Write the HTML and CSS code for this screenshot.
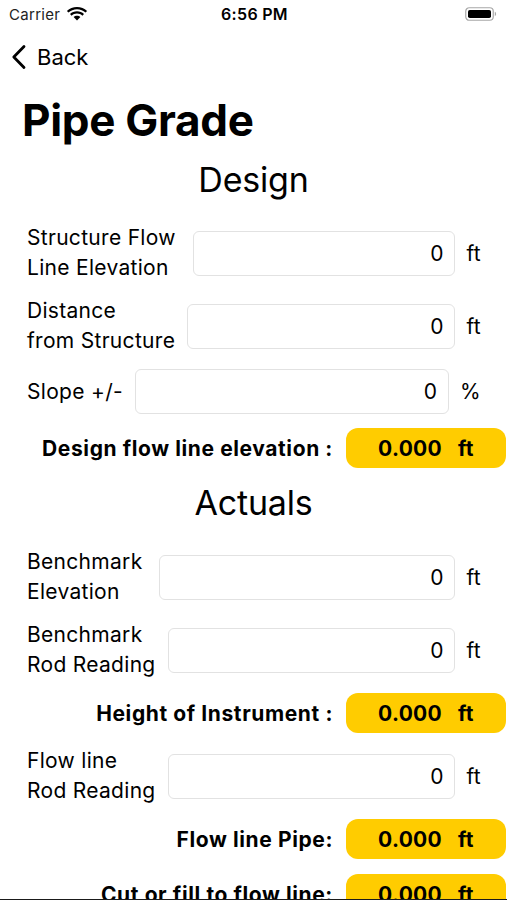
FILE: index.html
```html
<!DOCTYPE html>
<html lang="en">
<head>
<meta charset="utf-8">
<title>Pipe Grade</title>
<link rel="stylesheet" href="styles.css">
</head>
<body>
<div class="screen">
  <div class="status">
    <div class="status-left">
      <span class="carrier">Carrier</span>
      <svg class="wifi" width="22" height="16" viewBox="0 0 22 16">
        <path d="M11 3.2c3.3 0 6.3 1.3 8.5 3.4l1.6-1.7C18.5 2.4 14.9 0.9 11 0.9S3.5 2.4 0.9 4.9l1.6 1.7C4.7 4.5 7.7 3.2 11 3.2z" fill="#000"/>
        <path d="M11 7.6c2.1 0 4 .8 5.4 2.1l1.6-1.7C16.2 6.3 13.7 5.3 11 5.3S5.8 6.3 4 8l1.6 1.7C7 8.4 8.9 7.6 11 7.6z" fill="#000"/>
        <path d="M11 9.7c-1.3 0-2.5.5-3.4 1.3L11 14.6l3.4-3.6c-.9-.8-2.1-1.3-3.4-1.3z" fill="#000"/>
      </svg>
    </div>
    <span class="clock">6:56 PM</span>
    <div class="status-right">
      <svg class="battery" width="32" height="14" viewBox="0 0 32 14">
        <rect x="0.75" y="0.75" width="27.5" height="12.5" rx="3.5" fill="none" stroke="#a8a8a8" stroke-width="1.2"/>
        <rect x="3" y="3" width="23" height="8" rx="1.8" fill="#000"/>
        <path d="M29.8 4.8v4.4c.8-.3 1.3-1.2 1.3-2.2s-.5-1.9-1.3-2.2z" fill="#a8a8a8"/>
      </svg>
    </div>
  </div>

  <div class="nav">
    <svg class="chevron" width="16" height="26" viewBox="0 0 16 26">
      <path d="M13 2.5L2.8 13 13 23.5" fill="none" stroke="#000" stroke-width="2.8" stroke-linecap="round" stroke-linejoin="round"/>
    </svg>
    <span class="back">Back</span>
  </div>

  <h1 class="title">Pipe Grade</h1>

  <h2 class="section">Design</h2>
  <div class="form">
    <div class="row">
      <div class="label label-wide">Structure Flow<br>Line Elevation</div>
      <div class="field">0</div>
      <div class="unit">ft</div>
    </div>
    <div class="row">
      <div class="label">Distance<br>from Structure</div>
      <div class="field">0</div>
      <div class="unit">ft</div>
    </div>
    <div class="row">
      <div class="label">Slope +/-</div>
      <div class="field">0</div>
      <div class="unit">%</div>
    </div>
    <div class="result result-first">
      <div class="result-label">Design flow line elevation :</div>
      <div class="pill"><span>0.000</span><span>ft</span></div>
    </div>
  </div>

  <h2 class="section section-actuals">Actuals</h2>
  <div class="form">
    <div class="row">
      <div class="label label-wide">Benchmark<br>Elevation</div>
      <div class="field">0</div>
      <div class="unit">ft</div>
    </div>
    <div class="row">
      <div class="label">Benchmark<br>Rod Reading</div>
      <div class="field">0</div>
      <div class="unit">ft</div>
    </div>
    <div class="result">
      <div class="result-label">Height of Instrument :</div>
      <div class="pill"><span>0.000</span><span>ft</span></div>
    </div>
    <div class="row">
      <div class="label">Flow line<br>Rod Reading</div>
      <div class="field">0</div>
      <div class="unit">ft</div>
    </div>
    <div class="result">
      <div class="result-label">Flow line Pipe:</div>
      <div class="pill"><span>0.000</span><span>ft</span></div>
    </div>
    <div class="result result-last">
      <div class="result-label">Cut or fill to flow line:</div>
      <div class="pill"><span>0.000</span><span>ft</span></div>
    </div>
  </div>
</div>
</body>
</html>
```

FILE: styles.css
```css
* { box-sizing: border-box; }

html, body {
  margin: 0;
  padding: 0;
  background: #fff;
}

body {
  font-family: Inter, "Noto Sans", "Liberation Sans", sans-serif;
  color: #000;
}

.screen {
  width: 507px;
  height: 900px;
  overflow: hidden;
  border-bottom: 1px solid #1a1a1a;
  display: flex;
  flex-direction: column;
}

/* status bar */
.status {
  height: 28px;
  flex: none;
  display: grid;
  grid-template-columns: 1fr auto 1fr;
  align-items: center;
  padding: 0 9px;
}
.status-left {
  display: flex;
  align-items: center;
  gap: 6px;
}
.carrier {
  font-size: 15px;
  color: #222;
  letter-spacing: 0.3px;
}
.wifi { display: block; margin-top: -1px; }
.clock {
  font-size: 16px;
  font-weight: 600;
  letter-spacing: 0.3px;
  padding-left: 2px;
}
.status-right {
  display: flex;
  justify-content: flex-end;
}
.battery { display: block; margin-top: -1px; margin-right: 1px; }

/* nav */
.nav {
  height: 58px;
  flex: none;
  display: flex;
  align-items: center;
  padding-left: 11px;
  gap: 10px;
}
.chevron { display: block; }
.back {
  font-size: 22px;
}

.title {
  margin: 8px 0 0 22px;
  height: 52px;
  line-height: 52px;
  font-size: 44px;
  font-weight: 700;
  letter-spacing: -0.3px;
}

.section {
  margin: 12px 0 0 0;
  height: 44px;
  line-height: 44px;
  text-align: center;
  font-size: 34px;
  font-weight: 400;
  letter-spacing: -0.2px;
}
.section-actuals { margin-top: 13px; }

.form {
  margin-top: 21px;
  display: flex;
  flex-direction: column;
  gap: 13px;
  padding-left: 27px;
}
.section-actuals + .form { margin-top: 22px; }

.row {
  display: flex;
  align-items: center;
  padding-right: 26px;
}
.label {
  flex: none;
  font-size: 21px;
  line-height: 30px;
  letter-spacing: 0.3px;
  margin-right: 12px;
}
.label-wide { margin-right: 17px; }

.field {
  flex: 1;
  height: 45px;
  border: 1px solid #e2e2e2;
  border-radius: 6px;
  display: flex;
  align-items: center;
  justify-content: flex-end;
  padding-right: 11px;
  font-size: 21px;
}
.unit {
  flex: none;
  margin-left: 11px;
  font-size: 21px;
  letter-spacing: 0.3px;
}

.result {
  display: flex;
  justify-content: flex-end;
  align-items: center;
  gap: 13px;
  padding-right: 1px;
}
.result-first { margin-top: 1px; }
.result-last { margin-top: 2px; }
.result-label {
  font-size: 21px;
  font-weight: 700;
  letter-spacing: 0.6px;
}
.pill {
  width: 160px;
  height: 40px;
  background: #ffcc00;
  border-radius: 12px;
  display: flex;
  justify-content: center;
  align-items: center;
  gap: 16px;
  font-size: 21px;
  font-weight: 700;
  letter-spacing: 0.3px;
}
```
